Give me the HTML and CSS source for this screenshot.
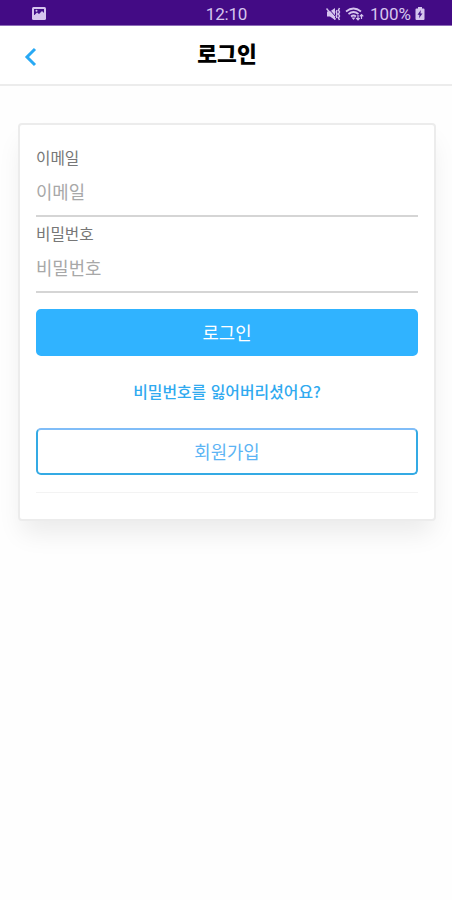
FILE: index.html
```html
<!DOCTYPE html>
<html lang="ko">
<head>
<meta charset="utf-8">
<meta name="viewport" content="width=device-width, initial-scale=1">
<title>로그인</title>
<link rel="stylesheet" href="styles.css">
</head>
<body>
<div class="status">
  <svg class="status-photo" width="14" height="13" viewBox="0 0 14 13"><rect width="14" height="13" rx="1.5" fill="#d6c5ee"/><rect x="2" y="2" width="10" height="6" fill="#43108a"/><path d="M2 8.500 5 5.500l2 1.500 3-3 2 2v3H2z" fill="#d6c5ee"/><circle cx="4.500" cy="3.700" r="1" fill="#d6c5ee"/></svg>
  <span class="status-time">12:10</span>
  <div class="status-right">
    <svg width="15" height="14" viewBox="0 0 15 14" fill="none" stroke="#d6c5ee"><path d="M1 4.500h3L9 1v12L4 9.500H1z" fill="#d6c5ee" stroke="none"/><path d="M2 1l8 9" stroke="#43108a" stroke-width="1"/><path d="M0.500 1.500l9 11" stroke-width="1.500"/><path d="M11 3l-.7 2 .7 2-.7 2 .7 2M13.500 1l-1 2 1 2-1 2 1 2-1 2 1 2" stroke-width="1.500"/></svg>
    <svg width="19" height="14" viewBox="0 0 19 14" fill="none" stroke="#d6c5ee" stroke-width="1.700"><path d="M1 4.500q7.500-6 15 0M3.500 7q5-4 10 0M6 9.500q2.500-2 5 0"/><path d="M6.500 10.500h4L8.500 13z" fill="#d6c5ee" stroke="none"/><path d="M13 8v5m-1.800-1.800L13 13l1.700-1.800M16.500 12V7.500m-1.700 1.800l1.700-1.800 1.800 1.800" stroke-width="1.200"/></svg>
    <span class="status-percent">100%</span>
    <svg width="10" height="13" viewBox="0 0 10 13"><path d="M3 0h4v1.500h1.500q1 0 1 1V12q0 1-1 1h-7q-1 0-1-1V2.500q0-1 1-1H3z" fill="#d6c5ee"/><path d="M5.800 3 2.500 7.700h2L4 11.200l3.500-4.700h-2z" fill="#43108a"/></svg>
  </div>
</div>
<header class="header">
  <svg class="back" width="13" height="20" viewBox="0 0 13 20"><path d="M11 2 3 10l8 8" fill="none" stroke="#28a9f4" stroke-width="3"/></svg>
  <h1 class="title">로그인</h1>
</header>
<main class="card">
  <label class="label" for="email">이메일</label>
  <input class="input" id="email" type="email" placeholder="이메일">
  <label class="label" for="password">비밀번호</label>
  <input class="input" id="password" type="password" placeholder="비밀번호">
  <button class="button primary">로그인</button>
  <a class="forgot">비밀번호를 잃어버리셨어요?</a>
  <button class="button outline">회원가입</button>
  <hr class="rule">
</main>
</body>
</html>
```
FILE: styles.css
```css
* { box-sizing: border-box; }
body {
  margin: 0;
  min-height: 900px;
  background: #fefefe;
  font-family: "Noto Sans CJK KR", sans-serif;
}
.status {
  display: grid;
  grid-template-columns: 1fr auto 1fr;
  align-items: center;
  height: 26px;
  padding: 1px 27px 0 32px;
  background: #430b85;
  border-bottom: 1px solid #8d6cb8;
  color: #d6c5ee;
  font: 17px/24px Roboto, sans-serif;
}
.status-time { margin: 1px 4px 0 0; letter-spacing: -.2px; }
.status-right {
  display: flex;
  justify-content: flex-end;
  align-items: center;
  gap: 4px;
}
.status-percent { margin: 1px 0 0 2px; }
.header {
  display: grid;
  grid-template-columns: 1fr auto 1fr;
  align-items: center;
  height: 60px;
  padding: 0 23px 0 24px;
  border-bottom: 2px solid #ececec;
  background: #fff;
}
.back { margin-top: 3px; }
.title {
  margin: -4px 0 0 1px;
  color: #000;
  font-size: 21.500px;
  font-weight: 900;
  line-height: 30px;
}
.card {
  display: flex;
  flex-direction: column;
  height: 398px;
  margin: 37px 16px 0 18px;
  padding: 22px 16px 0;
  border: 2px solid #ececec;
  border-radius: 4px;
  background: #fff;
  box-shadow: 0 16px 24px -4px rgba(0, 0, 0, .08);
}
.label {
  height: 22px;
  color: #777;
  font-size: 15.700px;
  font-weight: 400;
  line-height: 22px;
}
.input {
  height: 48px;
  margin: 0 0 6px;
  padding: 0 0 2px;
  border: 0;
  border-bottom: 2px solid #d5d5d5;
  border-radius: 0;
  outline: 0;
  background: none;
  font: 400 17.800px/26px "Noto Sans CJK KR", sans-serif;
}
.input::placeholder { color: #a8a8a8; opacity: 1; }
.button {
  height: 47px;
  padding: 0 0 2px;
  border: 2px solid #30b3ff;
  border-radius: 5px;
  font: 400 17.800px/26px "Noto Sans CJK KR", sans-serif;
}
.primary { margin-top: 10px; background: #30b3ff; color: #fff; }
.forgot {
  margin: 24px 0;
  color: #30aaf0;
  font-size: 15.900px;
  font-weight: 500;
  line-height: 24px;
  text-align: center;
}
.outline {
  border-color: #34aae4;
  border-top-color: #80bdf8;
  background: #fff;
  color: #5cb4f4;
}
.rule {
  width: 100%;
  margin: 17px 0 0;
  border: 0;
  border-top: 1px solid #f3f3f3;
}
```
